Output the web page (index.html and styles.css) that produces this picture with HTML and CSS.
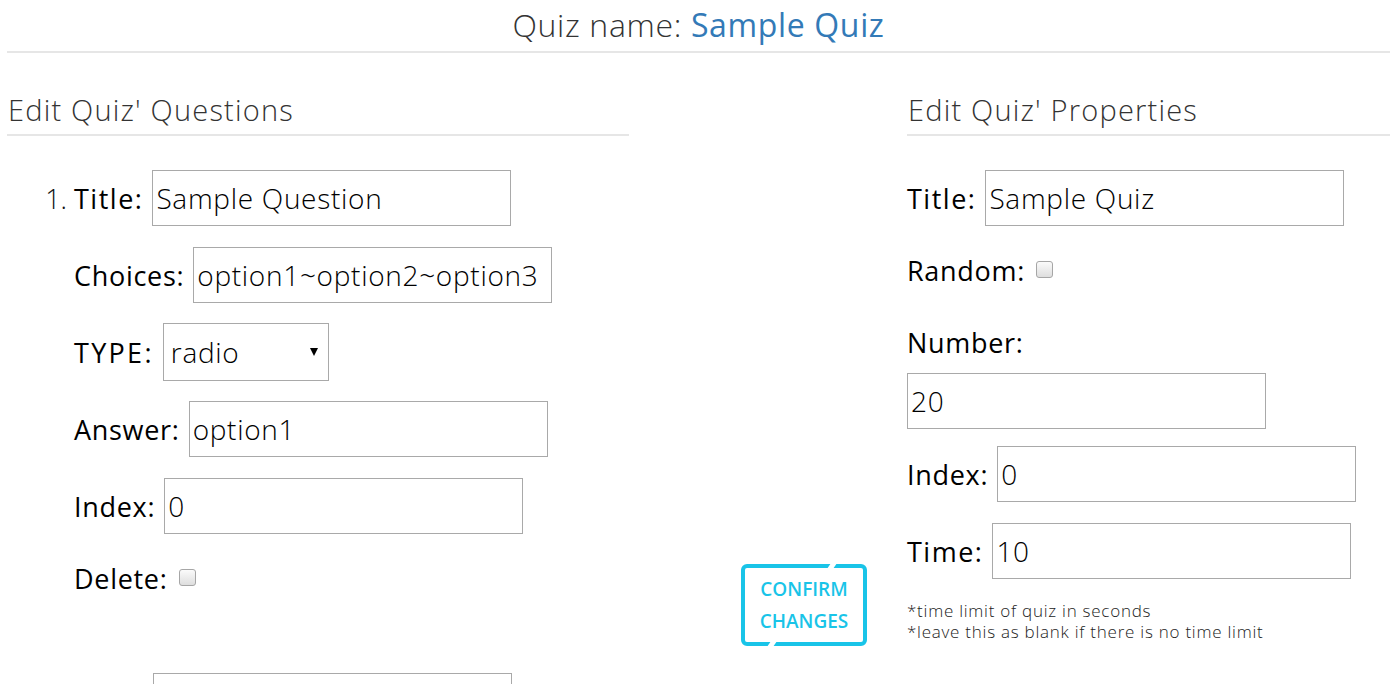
FILE: index.html
```html
<!DOCTYPE html>
<html lang="en">
<head>
<meta charset="utf-8">
<title>Edit Quiz</title>
<link rel="stylesheet" href="styles.css">
</head>
<body>
<div class="page">
  <h1 class="quiz-title">Quiz name: <span class="quiz-name">Sample Quiz</span></h1>
  <div class="columns">
    <section class="col-left">
      <h2 class="section-head">Edit Quiz' Questions</h2>
      <ol class="questions">
        <li class="question">
          <div class="row"><span class="label label-wide">Title:</span><input class="field" type="text" value="Sample Question"></div>
          <div class="row"><span class="label">Choices:</span><input class="field" type="text" value="option1~option2~option3"></div>
          <div class="row"><span class="label label-caps">TYPE:</span><span class="select-wrap"><select class="select"><option>radio</option><option>checkbox</option></select></span></div>
          <div class="row"><span class="label">Answer:</span><input class="field" type="text" value="option1"></div>
          <div class="row"><span class="label">Index:</span><input class="field" type="text" value="0"></div>
          <div class="row row-check"><span class="label">Delete:</span><span class="check"></span></div>
        </li>
        <li class="question question-next">
          <input class="field" type="text" value="" aria-label="Title">
        </li>
      </ol>
    </section>
    <div class="col-mid">
      <button class="confirm" type="button">Confirm<br>Changes</button>
    </div>
    <section class="col-right">
      <h2 class="section-head">Edit Quiz' Properties</h2>
      <div class="props">
        <div class="row"><span class="label label-wide">Title:</span><input class="field" type="text" value="Sample Quiz"></div>
        <div class="row row-check"><span class="label">Random:</span><span class="check"></span></div>
        <div class="label label-block">Number:</div>
        <input class="field field-block" type="text" value="20">
        <div class="row row-index"><span class="label">Index:</span><input class="field" type="text" value="0"></div>
        <div class="row"><span class="label label-wide">Time:</span><input class="field" type="text" value="10"></div>
        <p class="note">*time limit of quiz in seconds<br>*leave this as blank if there is no time limit</p>
      </div>
    </section>
  </div>
</div>
</body>
</html>
```

FILE: styles.css
```css
* { box-sizing: border-box; }
html, body { margin: 0; padding: 0; background: #fff; }
body {
  font-family: "Open Sans", "Noto Sans", "Liberation Sans", sans-serif;
  color: #333;
  overflow: hidden;
  height: 684px;
}
.page { padding: 0 7px; }

.quiz-title {
  margin: 0;
  padding-top: 2px;
  height: 53px;
  text-align: center;
  font-size: 32px;
  font-weight: 300;
  line-height: 46px;
  color: #333;
  border-bottom: 2px solid #e6e6e6;
  letter-spacing: 0.65px;
}
.quiz-name { color: #337ab7; font-weight: 500; }

.columns {
  display: grid;
  grid-template-columns: 622px 278px 483px;
  align-items: start;
}

.section-head {
  margin: 0;
  padding-top: 35px;
  height: 83px;
  font-size: 29px;
  font-weight: 300;
  line-height: 44px;
  color: #333;
  border-bottom: 2px solid #e6e6e6;
  padding-left: 1px;
  letter-spacing: 1.2px;
}

.questions {
  margin: 34px 0 0;
  padding-left: 67px;
  font-size: 27px;
  font-weight: 300;
  color: #111;
}
.question { margin-bottom: 72px; }
.question-next { list-style: none; padding-left: 79px; }

.row {
  display: flex;
  align-items: center;
  height: 56px;
  margin-bottom: 21px;
}
.row-check { height: 46px; margin-bottom: 0; }

.label {
  font-size: 27px;
  font-weight: 500;
  color: #000;
  margin-right: 9px;
  white-space: nowrap;
  letter-spacing: 0.7px;
}
.label-wide { letter-spacing: 1.5px; }
.label-caps { letter-spacing: 2.3px; }

.field {
  width: 359px;
  height: 56px;
  border: 1px solid #a9a9a9;
  padding: 0 3px;
  font-family: inherit;
  font-size: 28px;
  font-weight: 300;
  letter-spacing: 0.7px;
  color: #000;
  background: #fff;
  border-radius: 0;
  outline: none;
}

.select-wrap {
  position: relative;
  display: inline-block;
}
.select {
  -webkit-appearance: none;
  appearance: none;
  width: 166px;
  height: 58px;
  border: 1px solid #a9a9a9;
  border-radius: 0;
  background: #fff;
  padding: 0 7px;
  font-family: inherit;
  font-size: 28px;
  font-weight: 300;
  letter-spacing: 0.7px;
  color: #000;
}
.select-wrap::after {
  content: "";
  position: absolute;
  right: 11px;
  top: 25px;
  border-left: 4px solid transparent;
  border-right: 4px solid transparent;
  border-top: 8px solid #000;
  pointer-events: none;
}

.check {
  display: inline-block;
  width: 17px;
  height: 17px;
  margin-left: 2px;
  margin-top: -2px;
  border: 1px solid #a6a6a6;
  border-radius: 3px;
  background: linear-gradient(#fbfbfb, #dedede);
}

.col-mid { padding-top: 511px; padding-left: 112px; }
.confirm {
  position: relative;
  width: 126px;
  height: 82px;
  border: 4px solid #19c4e8;
  border-radius: 6px;
  background: #fff;
  color: #19c4e8;
  font-family: inherit;
  font-size: 19px;
  font-weight: 600;
  line-height: 32px;
  text-transform: uppercase;
  padding: 0;
  cursor: pointer;
}
.confirm::before,
.confirm::after {
  content: "";
  position: absolute;
  width: 6px;
  height: 6px;
  background: #fff;
  transform: skewX(-35deg);
}
.confirm::before { top: -5px; right: 28px; }
.confirm::after { bottom: -5px; left: 24px; }

.props { padding-top: 34px; }
.props .row-check { margin-bottom: 30px; }
.label-block { display: block; line-height: 40px; margin-bottom: 10px; }
.field-block { display: block; }
.row-index { margin-top: 17px; }
.note {
  margin: 21px 0 0;
  font-size: 17px;
  font-weight: 300;
  line-height: 21px;
  letter-spacing: 0.75px;
  color: #222;
}
```
